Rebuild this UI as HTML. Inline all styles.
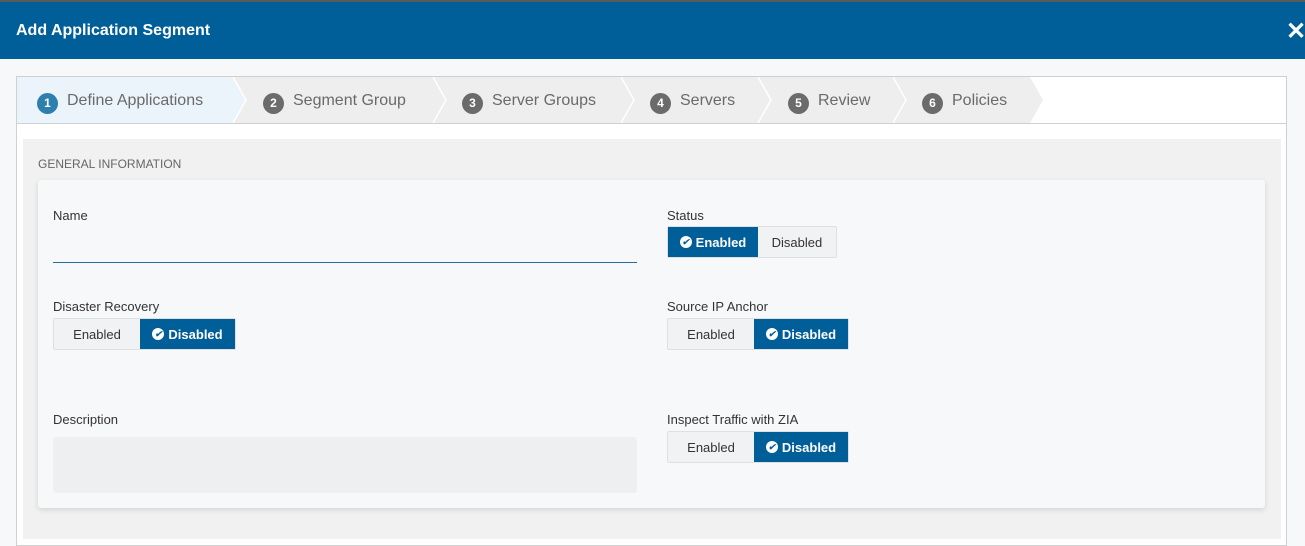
<!DOCTYPE html>
<html><head><style>
*{box-sizing:border-box;margin:0;padding:0}
body{width:1305px;height:532px;overflow:hidden;background:#f7f8fa;font-family:"Liberation Sans",sans-serif;position:relative}
.hdr{position:absolute;left:0;top:0;width:1305px;height:59px;background:#005e98;border-top:2px solid #5a5a5a}
.hdr h1{position:absolute;left:16px;top:20px;font-size:16px;color:#fff;font-weight:bold}
.x{position:absolute;left:1286px;top:15px;color:#fff;font-size:24px;font-weight:bold}
.wiz{position:absolute;left:16px;top:76px;width:1271px;height:470px;background:#fff;border:1px solid #d0d0d0}
.tabs{position:absolute;left:16px;top:76px}
.tt{position:absolute;top:92px;font-size:16px;color:#6a6a6a;white-space:nowrap}
.c{display:inline-block;width:21px;height:21px;border-radius:50%;background:#6b6b6b;color:#fff;font-size:12px;font-weight:bold;text-align:center;line-height:21px;margin-right:9px;vertical-align:-2px}
.panel{position:absolute;left:23px;top:139px;width:1258px;height:400px;background:#f1f1f1}
.gi{position:absolute;left:38px;top:157px;font-size:12px;color:#666}
.card{position:absolute;left:38px;top:180px;width:1227px;height:328px;background:#f7f8fa;border-radius:3px;box-shadow:0 2px 6px rgba(0,0,0,.12)}
.lb{position:absolute;font-size:13px;color:#333}
.tg{position:absolute;height:32px;display:flex;border:1px solid #e0e0e0;border-radius:2px;font-size:13px}
.tg span{display:flex;align-items:center;justify-content:center;color:#333;background:#f1f2f4}
.tg span.on{background:#005e98;color:#fff;font-weight:bold}
.ck{display:inline-block;width:12px;height:12px;border-radius:50%;background:#fff;color:#005e98;font-size:9px;line-height:12px;text-align:center;margin-right:4px}
</style></head><body>
<div class="hdr"><h1>Add Application Segment</h1><div class="x">✕</div></div>
<div class="wiz"></div>
<svg class="tabs" width="1040" height="48" style="left:17px;top:77px">
<rect x="0" y="0" width="1040" height="46" fill="#eeeeee"/>
<polygon points="0,0 216,0 229,23 216,46 0,46" fill="#ebf4fb"/>
<g fill="none" stroke="#fff" stroke-width="1.5">
<polyline points="216,0 229,23 216,46"/>
<polyline points="416,0 429,23 416,46"/>
<polyline points="604,0 617,23 604,46"/>
<polyline points="741,0 754,23 741,46"/>
<polyline points="876,0 889,23 876,46"/>
</g>
<polygon points="1013,0 1040,0 1040,46 1013,46 1026,23" fill="#fff"/>
<line x1="0" y1="46.5" x2="1040" y2="46.5" stroke="#d0d0d0"/>
</svg>
<div style="position:absolute;left:1040px;top:123px;width:246px;height:1px;background:#d0d0d0"></div>
<div class="tt" style="left:37px"><span class="c" style="background:#2f7fae">1</span>Define Applications</div>
<div class="tt" style="left:263px"><span class="c">2</span>Segment Group</div>
<div class="tt" style="left:462px"><span class="c">3</span>Server Groups</div>
<div class="tt" style="left:650px"><span class="c">4</span>Servers</div>
<div class="tt" style="left:788px"><span class="c">5</span>Review</div>
<div class="tt" style="left:922px"><span class="c">6</span>Policies</div>
<div class="panel"></div>
<div class="gi">GENERAL INFORMATION</div>
<div class="card"></div>
<div class="lb" style="left:53px;top:208px">Name</div>
<div style="position:absolute;left:53px;top:262px;width:584px;height:1px;background:#2a6a99"></div>
<div class="lb" style="left:667px;top:208px">Status</div>
<div class="tg" style="left:667px;top:226px;width:170px"><span class="on" style="width:91px"><i class="ck">✔</i>Enabled</span><span style="width:79px">Disabled</span></div>
<div class="lb" style="left:53px;top:299px">Disaster Recovery</div>
<div class="tg" style="left:53px;top:318px;width:183px"><span style="width:87px">Enabled</span><span class="on" style="width:96px"><i class="ck">✔</i>Disabled</span></div>
<div class="lb" style="left:667px;top:299px">Source IP Anchor</div>
<div class="tg" style="left:667px;top:318px;width:182px"><span style="width:87px">Enabled</span><span class="on" style="width:95px"><i class="ck">✔</i>Disabled</span></div>
<div class="lb" style="left:53px;top:412px">Description</div>
<div style="position:absolute;left:53px;top:437px;width:584px;height:56px;background:#eeeff1;border-radius:3px"></div>
<div class="lb" style="left:667px;top:412px">Inspect Traffic with ZIA</div>
<div class="tg" style="left:667px;top:431px;width:182px"><span style="width:87px">Enabled</span><span class="on" style="width:95px"><i class="ck">✔</i>Disabled</span></div>
</body></html>
